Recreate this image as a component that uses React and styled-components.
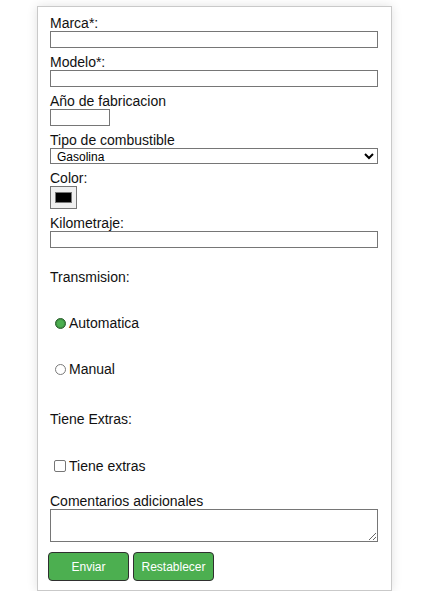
import React from 'react';
import styled, { createGlobalStyle } from 'styled-components';

const GlobalStyle = createGlobalStyle`
  body {
    margin: 0;
    background: #fff;
    font-family: "Liberation Sans", Arial, sans-serif;
  }
`;

const Card = styled.form`
  box-sizing: border-box;
  width: 355px;
  margin: 6px auto 0;
  padding: 8px 13px 9px 12px;
  border: 1px solid #c9c9c9;
  background: #fff;
  box-shadow: 0 0 10px rgba(0, 0, 0, 0.12);
  display: flex;
  flex-direction: column;
  color: #111;
  font-size: 14px;
  line-height: 16px;
`;

const Field = styled.div`
  display: flex;
  flex-direction: column;
  align-items: flex-start;
  margin-bottom: ${(p) => p.$mb ?? 6}px;
`;

const Label = styled.label`
  display: block;
  height: 16px;
  margin-top: ${(p) => p.$mt ?? 0}px;
`;

const TextInput = styled.input`
  box-sizing: border-box;
  width: ${(p) => p.$w || '100%'};
  height: 17px;
  margin: 0;
  padding: 0 2px;
  border: 1px solid #767676;
  border-radius: 0;
  font: 13px "Liberation Sans", Arial, sans-serif;
  background: #fff;
`;

const Select = styled.select`
  box-sizing: border-box;
  width: 100%;
  height: 16px;
  margin: 0;
  padding: 0 0 0 2px;
  border: 1px solid #767676;
  border-radius: 0;
  font: 12px "Liberation Sans", Arial, sans-serif;
  color: #000;
  background: #fff;
`;

const ColorInput = styled.input`
  box-sizing: border-box;
  width: 27px;
  height: 23px;
  margin: 0;
  padding: 1px 2px;
  border: 1px solid #767676;
  border-radius: 0;
  background: #efefef;
`;

const OptionRow = styled.label`
  display: flex;
  align-items: center;
  height: 16px;
  margin-top: ${(p) => p.$mt ?? 0}px;
`;

const Radio = styled.input.attrs({ type: 'radio' })`
  appearance: none;
  box-sizing: border-box;
  width: 11px;
  height: 11px;
  margin: 0 3px 0 5px;
  border: 1px solid #7a7a7a;
  border-radius: 50%;
  background: #fff;

  &:checked {
    border-color: #2c5e2e;
    background: #4caf50;
    box-shadow: inset 0 0 0 1px #3f8f43;
  }
`;

const Checkbox = styled.input.attrs({ type: 'checkbox' })`
  appearance: none;
  box-sizing: border-box;
  width: 12px;
  height: 12px;
  margin: 0 3px 0 4px;
  border: 1px solid #767676;
  border-radius: 2px;
  background: #fff;
`;

const TextArea = styled.textarea`
  box-sizing: border-box;
  width: 100%;
  height: 33px;
  margin: 0;
  border: 1px solid #767676;
  border-radius: 0;
  font: 13px "Liberation Sans", Arial, sans-serif;
`;

const ButtonRow = styled.div`
  display: flex;
  gap: 4px;
  margin: 10px -2px 0;
`;

const Button = styled.button`
  box-sizing: border-box;
  width: 81px;
  height: 29px;
  padding: 0;
  border: 1px solid #2f2f2f;
  border-radius: 4px;
  background: #4caf50;
  color: #fff;
  font: 12px "Liberation Sans", Arial, sans-serif;
`;

const App = () => {
  return (
    <>
      <GlobalStyle />
      <Card onSubmit={(e) => e.preventDefault()}>
        <Field>
          <Label>Marca*:</Label>
          <TextInput type="text" />
        </Field>
        <Field>
          <Label>Modelo*:</Label>
          <TextInput type="text" />
        </Field>
        <Field>
          <Label>Año de fabricacion</Label>
          <TextInput type="text" $w="60px" />
        </Field>
        <Field>
          <Label>Tipo de combustible</Label>
          <Select defaultValue="gasolina">
            <option value="gasolina">Gasolina</option>
            <option value="diesel">Diesel</option>
            <option value="electrico">Electrico</option>
          </Select>
        </Field>
        <Field>
          <Label>Color:</Label>
          <ColorInput type="color" defaultValue="#000000" />
        </Field>
        <Field $mb={0}>
          <Label>Kilometraje:</Label>
          <TextInput type="text" />
        </Field>

        <Label $mt={21}>Transmision:</Label>
        <OptionRow $mt={30}>
          <Radio name="transmision" defaultChecked />
          Automatica
        </OptionRow>
        <OptionRow $mt={30}>
          <Radio name="transmision" />
          Manual
        </OptionRow>

        <Label $mt={34}>Tiene Extras:</Label>
        <OptionRow $mt={31}>
          <Checkbox />
          Tiene extras
        </OptionRow>

        <Field $mb={0}>
          <Label $mt={19}>Comentarios adicionales</Label>
          <TextArea />
        </Field>

        <ButtonRow>
          <Button type="submit">Enviar</Button>
          <Button type="reset">Restablecer</Button>
        </ButtonRow>
      </Card>
    </>
  );
};

export default App;
